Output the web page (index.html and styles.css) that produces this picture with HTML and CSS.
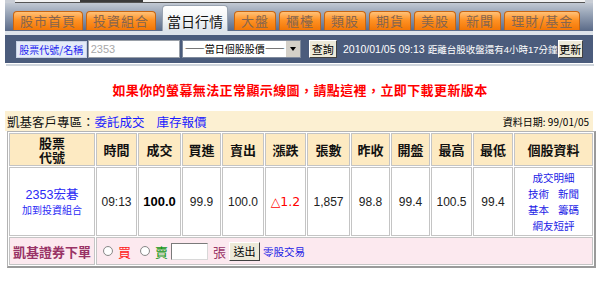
FILE: index.html
```html
<!DOCTYPE html>
<html lang="zh-Hant">
<head>
<meta charset="utf-8">
<title>當日行情</title>
<link rel="stylesheet" href="styles.css">
</head>
<body>
<div class="page">
  <div class="nav">
    <div class="banner"><span class="banner-img"></span></div>
    <div class="tabs">
      <a class="tab">股市首頁</a>
      <a class="tab">投資組合</a>
      <a class="tab active">當日行情</a>
      <a class="tab">大盤</a>
      <a class="tab">櫃檯</a>
      <a class="tab">類股</a>
      <a class="tab">期貨</a>
      <a class="tab">美股</a>
      <a class="tab">新聞</a>
      <a class="tab">理財/基金</a>
    </div>
    <div class="strip"></div>
    <div class="search">
      <button class="btn-code">股票代號/名稱</button>
      <input class="code" value="2353">
      <span class="select"><span class="select-text">——當日個股股價——</span><span class="select-btn"><span class="arrow"></span></span></span>
      <button class="btn btn-query">查詢</button>
      <span class="clock"><span class="clock-date">2010/01/05 09:13 </span><span class="clock-cjk">距離台股收盤還有4小時17分鐘</span></span>
      <button class="btn btn-refresh">更新</button>
    </div>
  </div>
  <div class="sep"></div>
  <p class="notice">如果你的螢幕無法正常顯示線圖，請點這裡，立即下載更新版本</p>
  <div class="zone">
    <span class="zone-left">凱基客戶專區：<a class="zone-link">委託成交</a><a class="zone-link">庫存報價</a></span>
    <span class="zone-date">資料日期: 99/01/05</span>
  </div>
  <table class="quote">
    <colgroup>
      <col class="w86"><col class="w41"><col class="w43"><col class="w39"><col class="w42"><col class="w41">
      <col class="w43"><col class="w39"><col class="w39"><col class="w41"><col class="w40"><col class="w79">
    </colgroup>
    <tr class="head">
      <th><span class="hl">股票</span><span class="hl">代號</span></th><th>時間</th><th>成交</th><th>買進</th><th>賣出</th><th>漲跌</th>
      <th>張數</th><th>昨收</th><th>開盤</th><th>最高</th><th>最低</th><th>個股資料</th>
    </tr>
    <tr class="data">
      <td class="stock"><a class="stock-name">2353宏碁</a><a class="stock-add">加到投資組合</a></td>
      <td>09:13</td>
      <td class="bold">100.0</td>
      <td>99.9</td>
      <td>100.0</td>
      <td class="up">△1.2</td>
      <td>1,857</td>
      <td>98.8</td>
      <td>99.4</td>
      <td>100.5</td>
      <td>99.4</td>
      <td class="links">
        <div class="line"><a>成交明細</a></div>
        <div class="line"><a>技術</a><a>新聞</a></div>
        <div class="line"><a>基本</a><a>籌碼</a></div>
        <div class="line"><a>網友短評</a></div>
      </td>
    </tr>
    <tr class="order">
      <th>凱基證券下單</th>
      <td colspan="11">
        <div class="order-form">
          <span class="radio"></span><span class="buy">買</span>
          <span class="radio"></span><span class="sell">賣</span>
          <input class="qty">
          <span class="unit">張</span>
          <button class="btn btn-send">送出</button>
          <a class="odd">零股交易</a>
        </div>
      </td>
    </tr>
  </table>
</div>
</body>
</html>
```

FILE: styles.css
```css
html, body {
  margin: 0;
  padding: 0;
  background: #fff;
}

body {
  font-family: "Liberation Sans", "Noto Sans CJK TC", sans-serif;
  font-size: 12px;
  color: #000;
}

.page {
  width: 600px;
  height: 301px;
  overflow: hidden;
}

a {
  text-decoration: none;
  cursor: pointer;
}

/* ---------- top navigation ---------- */
.nav {
  margin-left: 5px;
  width: 588px;
}

.banner {
  height: 3px;
  background: #c9ced6;
  padding-left: 10px;
}

.banner-img {
  display: block;
  width: 570px;
  height: 2px;
  background: linear-gradient(to right, #f2f2f2 0, #f2f2f2 65px, #3a3a3a 65px, #3a3a3a 128px, #f2f2f2 128px);
  border-bottom: 1px solid #555;
}

.tabs {
  display: flex;
  align-items: flex-end;
  height: 28px;
  padding-left: 8px;
  background: linear-gradient(to bottom, #c2c9d3 0%, #9ba7b9 35%, #5a6a88 100%);
}

.tab {
  box-sizing: border-box;
  height: 19px;
  margin: 0 3px 1px 0;
  padding: 0 6px;
  font-family: "Noto Sans CJK TC", sans-serif;
  font-size: 13px;
  line-height: 18px;
  letter-spacing: 1px;
  color: #86654f;
  background: linear-gradient(to bottom, #ffc27a 0%, #ff9224 45%, #f27606 100%);
  border: 1px solid #c9650f;
  border-bottom: none;
  border-radius: 4px 4px 0 0;
  white-space: nowrap;
}

.tab.active {
  height: 26px;
  margin: 0 6px 0 3px;
  padding: 5px 4px 0;
  font-size: 14px;
  line-height: 20px;
  letter-spacing: 0;
  color: #111;
  background: linear-gradient(to bottom, #ffffff 0%, #f3f5f7 50%, #dde3ea 100%);
  border: 1px solid #9aa4b2;
  border-bottom: none;
}

.strip {
  height: 4px;
  background: #dde3ea;
}

.search {
  display: flex;
  align-items: center;
  height: 28px;
  padding-left: 11px;
  background: #4b5c7c;
}

.btn-code {
  box-sizing: border-box;
  width: 75px;
  height: 17px;
  margin-right: 1px;
  padding: 0;
  font-family: "Noto Sans CJK TC", sans-serif;
  font-size: 10px;
  line-height: 15px;
  white-space: nowrap;
  color: #1c1cf0;
  background: #e4ebf8;
  border: 1px solid #c8d2e6;
}

.code {
  box-sizing: border-box;
  width: 92px;
  height: 18px;
  margin: 0 2px 0 0;
  padding: 0 2px;
  font-family: "Liberation Sans", sans-serif;
  font-size: 11px;
  color: #a8a8a8;
  background: #fff;
  border: 1px solid #9aa0a8;
}

.select {
  box-sizing: border-box;
  display: flex;
  align-items: center;
  width: 120px;
  height: 18px;
  margin-right: 8px;
  background: #fff;
  border: 1px solid #7f8a9c;
}

.select-text {
  flex: 1;
  padding-left: 2px;
  font-family: "Noto Sans CJK TC", sans-serif;
  font-size: 10px;
  line-height: 16px;
  color: #000;
  white-space: nowrap;
  overflow: hidden;
}

.select-btn {
  display: flex;
  align-items: center;
  justify-content: center;
  width: 14px;
  height: 16px;
  background: #d4d0c8;
  border-left: 1px solid #fff;
}

.arrow {
  width: 0;
  height: 0;
  border-left: 3px solid transparent;
  border-right: 3px solid transparent;
  border-top: 4px solid #000;
}

.btn {
  box-sizing: border-box;
  height: 18px;
  padding: 0;
  font-family: "Noto Sans CJK TC", sans-serif;
  font-size: 11px;
  line-height: 14px;
  white-space: nowrap;
  color: #000;
  background: #ece9d8;
  border: 1px solid;
  border-color: #fff #404040 #404040 #fff;
}

.btn-query {
  width: 30px;
  margin-right: 6px;
}

.clock {
  color: #fff;
  white-space: nowrap;
}

.clock-date {
  font-family: "Liberation Sans", sans-serif;
  font-size: 10.5px;
}

.clock-cjk {
  font-family: "Liberation Sans", "Noto Sans CJK TC", sans-serif;
  font-size: 9.5px;
}

.btn-refresh {
  width: 27px;
  margin: 0 10px 0 auto;
}

/* ---------- notice ---------- */
.sep {
  margin: 1px 0 0 6px;
  width: 588px;
  height: 2px;
  background: #cfd5dc;
}

.notice {
  margin: 0;
  padding: 13px 0 11px;
  font-family: "Noto Sans CJK TC", sans-serif;
  font-size: 13px;
  font-weight: bold;
  line-height: 21px;
  letter-spacing: 0.4px;
  color: #ff0000;
  text-align: center;
}

/* ---------- zone bar ---------- */
.zone {
  box-sizing: border-box;
  display: flex;
  align-items: center;
  justify-content: space-between;
  margin-left: 5px;
  width: 588px;
  height: 20px;
  padding: 0 4px 0 2px;
  background: #fcf0d2;
}

.zone-left {
  font-family: "Noto Sans CJK TC", sans-serif;
  font-size: 12.5px;
  color: #111;
}

.zone-link {
  color: #1a1aff;
  margin-right: 12px;
}

.zone-date {
  font-family: "Noto Sans CJK TC", sans-serif;
  font-size: 10px;
  color: #000;
}

/* ---------- quote table ---------- */
.quote {
  margin-left: 7px;
  width: 589px;
  table-layout: fixed;
  border-collapse: separate;
  border-spacing: 1px;
  border: 1px solid #b4b4b4;
  border-right: 2px solid #9a9a9a;
  border-bottom: 2px solid #9a9a9a;
  background: #fff;
}

.w86 { width: 86px; }
.w79 { width: 79px; }
.w43 { width: 43px; }
.w42 { width: 42px; }
.w41 { width: 41px; }
.w40 { width: 40px; }
.w39 { width: 39px; }

.quote th,
.quote td {
  box-sizing: border-box;
  padding: 0;
  border: 1px solid #c4c4c4;
  text-align: center;
  vertical-align: middle;
}

.head th {
  height: 33px;
  background: #fdeac2;
  font-family: "Noto Sans CJK TC", sans-serif;
  font-size: 13px;
  font-weight: bold;
  line-height: 16px;
  color: #111;
}

.hl {
  display: block;
  height: 14px;
  line-height: 14px;
}

.data td {
  height: 69px;
  font-family: "Liberation Sans", "Noto Sans CJK TC", sans-serif;
  font-size: 12px;
  color: #222;
}

.data .bold {
  font-weight: bold;
  font-size: 13px;
  color: #000;
}

.data .up {
  font-family: "DejaVu Sans", sans-serif;
  font-size: 12.5px;
  color: #ff0000;
}

.stock a {
  display: block;
  color: #2a2af5;
}

.stock-name {
  font-size: 12.5px;
  line-height: 16px;
}

.stock-add {
  font-family: "Noto Sans CJK TC", sans-serif;
  font-size: 10px;
  line-height: 14px;
}

.links .line {
  display: flex;
  justify-content: center;
  gap: 9px;
  font-family: "Noto Sans CJK TC", sans-serif;
  font-size: 10.5px;
  line-height: 16px;
}

.links a {
  color: #1a1ae6;
}

.order th,
.order td {
  height: 28px;
  background: #fce9ef;
}

.order th {
  font-family: "Noto Sans CJK TC", sans-serif;
  font-size: 13px;
  font-weight: bold;
  color: #993366;
}

.order-form {
  display: flex;
  align-items: center;
  padding-left: 6px;
  font-family: "Noto Sans CJK TC", sans-serif;
  font-size: 13px;
}

.radio {
  box-sizing: border-box;
  width: 10px;
  height: 10px;
  border-radius: 50%;
  border: 1px solid #8a8a8a;
  background: radial-gradient(circle, #fff 55%, #e4e4e4 100%);
  margin-right: 5px;
}

.buy {
  color: #ff2020;
  margin-right: 9px;
}

.sell {
  color: #129612;
  margin-right: 3px;
}

.qty {
  box-sizing: border-box;
  width: 37px;
  height: 17px;
  margin: 0 5px 0 0;
  padding: 0;
  background: #fff;
  border: 1px solid;
  border-color: #7a7a7a #d8d8d8 #d8d8d8 #7a7a7a;
}

.unit {
  color: #993366;
  margin-right: 3px;
}

.btn-send {
  width: 31px;
  height: 19px;
  margin-right: 3px;
}

.odd {
  font-size: 10.5px;
  color: #1a1ae6;
}
```
